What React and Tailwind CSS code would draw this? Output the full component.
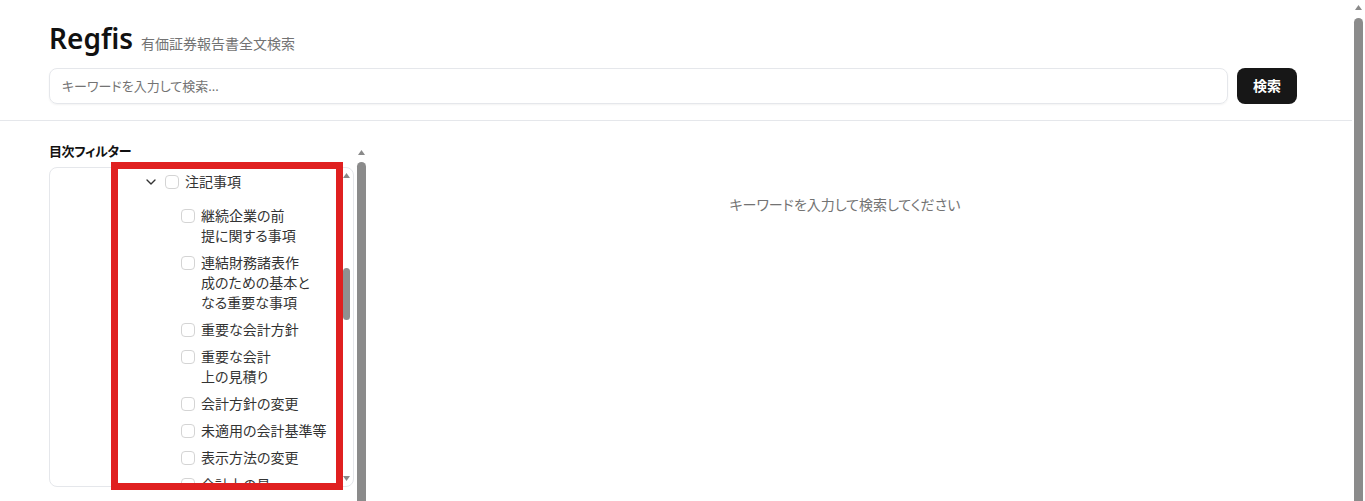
import React from "react";
import { ChevronDown } from "lucide-react";

// the part of the TOC tree that is in view: 注記事項 and its first children
const notes = {
  label: ["注記事項"],
  open: true,
  children: [
    { label: ["継続企業の前", "提に関する事項"] },
    { label: ["連結財務諸表作", "成のための基本と", "なる重要な事項"] },
    { label: ["重要な会計方針"] },
    { label: ["重要な会計", "上の見積り"] },
    { label: ["会計方針の変更"] },
    { label: ["未適用の会計基準等"] },
    { label: ["表示方法の変更"] },
    { label: ["会計上の見", "積りの変更"] },
  ],
};

const Arrow = ({ down }) => (
  <svg width="7" height="5" viewBox="0 0 7 5" className="shrink-0">
    <polygon points={down ? "0,0 7,0 3.5,5" : "3.5,0 7,5 0,5"} fill="#8a8a8a" />
  </svg>
);

const TocNode = ({ node }) => {
  const hasChildren = !!node.children;
  return (
    <div className="flex flex-col">
      <div className="flex items-start gap-1.5">
        <span className="flex h-5 w-4 shrink-0 items-center justify-center text-[#333]">
          {hasChildren && <ChevronDown size={16} strokeWidth={2} />}
        </span>
        <span className="mt-[3px] size-3.5 shrink-0 rounded-[4px] border border-[#d4d4d4] bg-white" />
        <span className="flex flex-col whitespace-nowrap text-sm leading-5 text-[#333]">
          {node.label.map((line) => (
            <span key={line}>{line}</span>
          ))}
        </span>
      </div>
      {node.open && hasChildren && (
        <div className="ml-4 mt-3.5 flex flex-col gap-[7px]">
          {node.children.map((c, i) => (
            <TocNode key={i} node={c} />
          ))}
        </div>
      )}
    </div>
  );
};

const TocFilter = () => (
  <div className="w-[305px] shrink-0">
    <div className="mb-2 text-[13px] font-bold leading-4 tracking-[-0.03em] text-[#111]">目次フィルター</div>
    <div className="flex h-[320px] overflow-hidden rounded-lg border border-gray-200 bg-white">
      <div className="min-w-0 flex-1 overflow-hidden pl-[93px] pt-1">
        <TocNode node={notes} />
      </div>
      {/* list scrollbar, scrolled about a third of the way down */}
      <div className="flex w-[13px] shrink-0 flex-col items-center pb-[5px] pt-[5px]">
        <Arrow />
        <div className="flex-1">
          <div className="mt-[90px] h-[52px] w-[7px] rounded-full bg-[#909090]" />
        </div>
        <Arrow down />
      </div>
    </div>
  </div>
);

const App = () => {
  return (
    <div className="relative flex h-screen overflow-hidden bg-white font-['Noto_Sans','Noto_Sans_CJK_JP',sans-serif] text-[#111] [font-feature-settings:'palt']">
      <div className="min-w-0 flex-1">
        <header className="border-b border-gray-200">
          <div className="ml-[49px] w-[1248px] pb-4 pt-5">
            <div className="flex items-baseline gap-2">
              <h1 className="text-[28px] font-semibold leading-9">Regfis</h1>
              <span className="text-sm text-neutral-500">有価証券報告書全文検索</span>
            </div>
            <div className="mt-3 flex gap-[9px]">
              <input
                type="text"
                placeholder="キーワードを入力して検索..."
                className="h-9 flex-1 rounded-lg border border-gray-200 px-3 text-[13px] shadow-xs outline-none [font-feature-settings:'palt'] placeholder:text-neutral-500 placeholder:[font-feature-settings:'palt']"
              />
              <button className="h-9 w-[60px] rounded-lg bg-[#171717] text-sm font-semibold text-white">
                検索
              </button>
            </div>
          </div>
        </header>

        <div className="ml-[49px] mt-[22px] flex h-[420px] w-[1248px] gap-6">
          <aside className="flex w-80 shrink-0">
            <TocFilter />
            {/* sidebar scrollbar */}
            <div className="flex w-[15px] shrink-0 flex-col items-center pt-[7px]">
              <Arrow />
              <div className="mt-[7px] w-[9px] flex-1 rounded-t-full bg-[#8b8b8b]" />
            </div>
          </aside>
          <main className="flex-1 pt-[52px] text-center text-sm text-neutral-500">
            キーワードを入力して検索してください
          </main>
        </div>
      </div>

      {/* page scrollbar */}
      <div className="flex w-[13px] shrink-0 flex-col items-center pt-[5px]">
        <Arrow />
        <div className="mt-[8px] w-[9px] flex-1 rounded-t-full bg-[#8b8b8b]" />
      </div>

      {/* red annotation frame over the filter */}
      <div className="pointer-events-none absolute left-[111px] top-[162px] h-[328px] w-[232px] border-[7px] border-[#e02020]" />
    </div>
  );
};

export default App;
